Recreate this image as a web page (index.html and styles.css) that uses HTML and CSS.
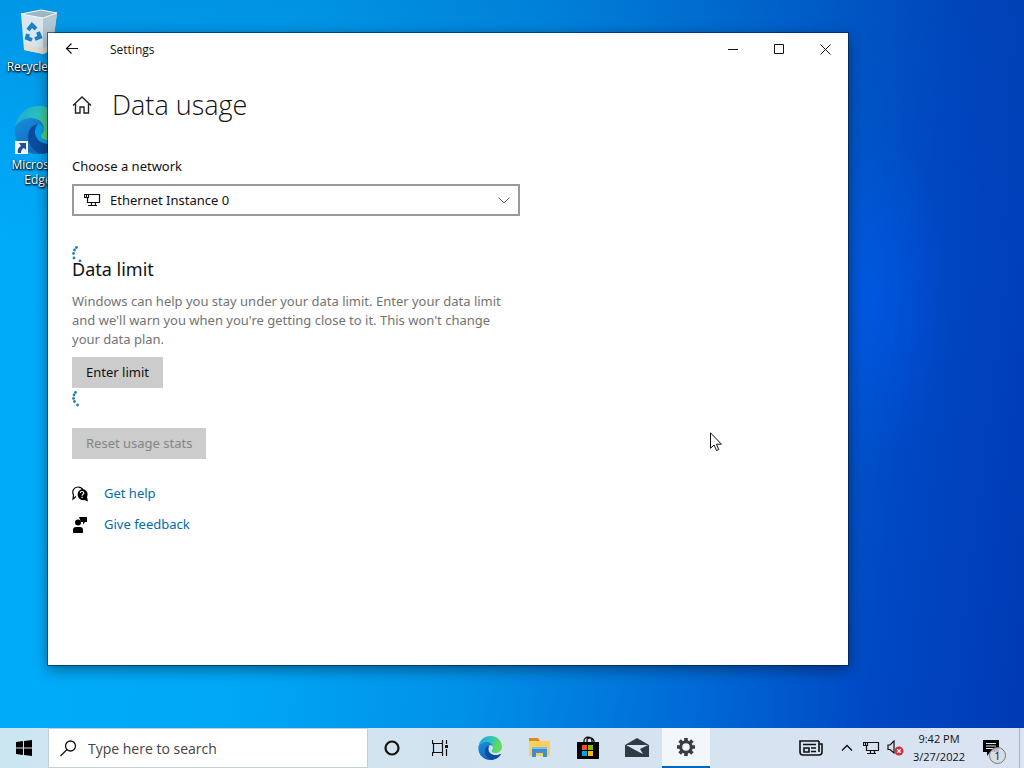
FILE: index.html
```html
<!DOCTYPE html>
<html lang="en">
  <head>
    <meta charset="UTF-8" />
    <meta name="viewport" content="width=device-width, initial-scale=1.0" />
    <title>Settings - Data usage</title>
    <link rel="stylesheet" href="styles.css" />
  </head>
  <body>
    <!-- Shared icons -->
    <svg class="defs" aria-hidden="true">
      <defs>
        <linearGradient id="edgeTop" x1="0" y1="0" x2="1" y2="0.3">
          <stop offset="0" stop-color="#1aa0dc" />
          <stop offset="0.5" stop-color="#2bc3c0" />
          <stop offset="1" stop-color="#66dc52" />
        </linearGradient>
        <linearGradient id="edgeSide" x1="0" y1="0" x2="0.5" y2="1">
          <stop offset="0" stop-color="#1a8fdd" />
          <stop offset="1" stop-color="#1067bd" />
        </linearGradient>
        <symbol id="edge" viewBox="0 0 48 48">
          <path fill="url(#edgeTop)" d="M1 22C2 9 12 0 25 0c13 0 23 10 23 21 0 8-6 13-13 13-5 0-8-2-8-4s3-3 3-7c0-5-5-9-11-9-8 0-14 3-18 8z" />
          <path fill="url(#edgeSide)" d="M1 21c3-5 9-9 16-9 8 0 13 5 13 11 0-3-3-5-6-5-5 0-8 5-8 11 0 9 7 16 16 18-3 1-5 1-8 1C10 48-1 36 1 21z" />
          <path fill="#0c4c9c" d="M24 18c-6 1-10 6-10 13 0 8 6 15 14 17 8-1 14-5 18-11 0-1-1-1-2-1-3 2-6 2-9 2-8 0-14-5-14-12 0-3 1-6 3-8z" />
        </symbol>
        <symbol id="monitor" viewBox="0 0 17 14">
          <path fill="none" stroke="currentColor" stroke-width="1.200" d="M5 1.500h10.500v8h-12V5M.5 1.500h4v3h-4zM7.500 9.500v3M11.500 9.500v3M4 12.500h9" />
          <path fill="currentColor" d="M2 2h1v2H2z" />
        </symbol>
      </defs>
    </svg>

    <main class="desktop">
      <ul class="shortcuts">
        <li class="shortcut">
          <svg width="44" height="48" viewBox="0 0 44 48">
            <path fill="#d9e6ed" d="M5 6l20-4 16 3-5 37-9 4-19-4z" />
            <path fill="#b3c8d3" d="M27 10l14-5-5 37-9 4z" />
            <path fill="#9fb6c2" d="M5 6l20-4 16 3-14 5z" />
            <path fill="none" stroke="#f1f7fa" d="M5 6l20-4 16 3-14 5z" />
            <path fill="#e8d9c8" d="M8 36l19 4 9-3-1 5-8 4-19-4z" opacity=".7" />
            <g fill="none" stroke="#1b7ecb" stroke-width="4">
              <path d="M12 22l4-5 4 4" />
              <path d="M22 24l2 5-5 2" />
              <path d="M16 32l-5-2 1-4" />
            </g>
          </svg>
          <span>Recycle Bin</span>
        </li>
        <li class="shortcut">
          <svg width="48" height="48"><use href="#edge" /></svg>
          <svg class="shortcut-arrow" width="13" height="13" viewBox="0 0 13 13">
            <path fill="#f5f5f5" d="M0 0h13v13H0z" />
            <path fill="#1c4f98" d="M4 2h7v7L9 7c-2 1-3 2-3 5H3c-1-3 0-5 3-7z" />
          </svg>
          <span>Microsoft Edge</span>
        </li>
      </ul>

      <section class="window">
        <header class="titlebar">
          <button class="back" aria-label="Back">
            <svg width="14" height="12" viewBox="0 0 14 12">
              <path fill="none" stroke="#111" stroke-width="1.200" d="M13 5.500H1.500M6.500.5l-5 5 5 5" />
            </svg>
          </button>
          <span class="titlebar-name">Settings</span>
          <button class="caption" aria-label="Minimize">
            <svg width="11" height="11"><path stroke="#111" d="M0 5.500h10" /></svg>
          </button>
          <button class="caption" aria-label="Maximize">
            <svg width="11" height="11"><path fill="none" stroke="#111" d="M.5.5h9v9h-9z" /></svg>
          </button>
          <button class="caption" aria-label="Close">
            <svg width="11" height="11"><path stroke="#111" d="M.5.5l10 10M10.500.5l-10 10" /></svg>
          </button>
        </header>

        <div class="page">
          <div class="page-header">
            <a href="#" class="home" aria-label="Home">
              <svg width="20" height="18" viewBox="0 0 20 18">
                <path fill="none" stroke="#222" stroke-width="1.400" d="M1 9.500L10 1l9 8.500M3.500 8v9H8v-6h4v6h4.500V8" />
              </svg>
            </a>
            <h1>Data usage</h1>
          </div>

          <label class="field-label" for="network">Choose a network</label>
          <div class="network-select">
            <svg class="network-icon" width="17" height="14"><use href="#monitor" /></svg>
            <select id="network">
              <option>Ethernet Instance 0</option>
            </select>
            <svg class="network-chevron" width="12" height="7" viewBox="0 0 12 7">
              <path fill="none" stroke="#666" d="M.5.5L6 6 11.500.5" />
            </svg>
          </div>

          <svg class="spinner" width="16" height="16" viewBox="0 0 16 16">
            <circle cx="4.500" cy="1.500" r="1.400" />
            <circle cx="2.500" cy="4" r="1.400" />
            <circle cx="1.500" cy="7.500" r="1.400" />
            <circle cx="2" cy="12" r="1.400" />
            <circle cx="8" cy="15" r="1.400" />
          </svg>
          <h2>Data limit</h2>
          <p class="description">
            Windows can help you stay under your data limit. Enter your data
            limit and we'll warn you when you're getting close to it. This
            won't change your data plan.
          </p>
          <button class="btn">Enter limit</button>
          <svg class="spinner" width="16" height="16" viewBox="0 0 16 16">
            <circle cx="3.500" cy="1.500" r="1.400" />
            <circle cx="2" cy="4" r="1.400" />
            <circle cx="1.500" cy="7.500" r="1.400" />
            <circle cx="2.500" cy="10.500" r="1.400" />
            <circle cx="5.500" cy="14" r="1.400" />
          </svg>
          <button class="btn btn-reset" disabled>Reset usage stats</button>

          <div class="support">
            <svg width="16" height="16" viewBox="0 0 16 16">
              <path fill="none" stroke="#000" stroke-width="1.200" d="M4 10.500L1 13l.5-4C-.5 5 2 1 6 1c2 0 4 1 5 3" />
              <path d="M10 3a5.500 5.500 0 0 1 5 8l1 4.500-3.500-1.500A5.500 5.500 0 1 1 10 3z" />
              <path fill="none" stroke="#fff" stroke-width="1.200" d="M8.300 7c0-2 3.500-2 3.500 0 0 1.300-1.700 1.200-1.700 2.700M10.100 10.800v1.200" />
            </svg>
            <a href="#">Get help</a>
          </div>
          <div class="support">
            <svg width="16" height="16" viewBox="0 0 16 16">
              <path d="M7 0h8v5h-2l-2 2.500V5H9z" />
              <circle cx="6" cy="5.500" r="3" />
              <path d="M1 16v-3c0-2 1-3 3-3h4c2 0 3 1 3 3v3z" />
            </svg>
            <a href="#">Give feedback</a>
          </div>
        </div>
      </section>

      <svg class="cursor" width="13" height="20" viewBox="0 0 13 20">
        <path fill="#fff" stroke="#111" d="M.5.8v15.500l3.600-3.300 2.400 5.500 2.300-1-2.400-5.300h5z" />
      </svg>
    </main>

    <footer class="taskbar">
      <button class="start" aria-label="Start">
        <svg width="16" height="16" viewBox="0 0 16 16">
          <path d="M0 2l7-1v6.500H0zM8 .9L16 0v7.500H8zM0 8.500h7V15l-7-1zM8 8.500h8V16l-8-1z" />
        </svg>
      </button>
      <div class="search">
        <svg width="17" height="17" viewBox="0 0 17 17">
          <circle cx="10.500" cy="6" r="5" fill="none" stroke="#111" stroke-width="1.300" />
          <path stroke="#111" stroke-width="1.300" d="M7 9.500L.5 16" />
        </svg>
        <input type="text" aria-label="Search" placeholder="Type here to search" />
      </div>
      <nav class="apps">
        <button aria-label="Cortana">
          <svg width="18" height="18">
            <circle cx="9" cy="9" r="6.500" fill="none" stroke="#111" stroke-width="2.200" />
          </svg>
        </button>
        <button aria-label="Task View">
          <svg width="18" height="16" viewBox="0 0 18 16">
            <path fill="none" stroke="#111" stroke-width="1.200" d="M.5 0v3.500h10V0M.5 16v-3.500h10V16M1.500 3.500v9M10.500 3.500v9M14.500 0v4M14.500 9v7" />
            <path fill="#111" d="M13 5h3v3h-3z" />
          </svg>
        </button>
        <button aria-label="Microsoft Edge">
          <svg width="24" height="24"><use href="#edge" /></svg>
        </button>
        <button aria-label="File Explorer">
          <svg width="24" height="20" viewBox="0 0 24 20">
            <path fill="#e08a1c" d="M2 0h9l2 3H2z" />
            <path fill="#fbce5e" d="M2 3h21v15H2z" />
            <path fill="#3e8ed0" d="M5 9h15v10h-4v-4H9v4H5z" />
            <path fill="#7dbdec" d="M5 9h15v2H5z" />
          </svg>
        </button>
        <button aria-label="Microsoft Store">
          <svg width="24" height="24" viewBox="0 0 24 24">
            <path fill="none" stroke="#111" stroke-width="1.300" d="M8 7V5c0-5 8-5 8 0v2M11 7V4c0-3 6-3 7 1v2" />
            <path fill="#000" d="M1 6h22v17H1z" />
            <path fill="#f25022" d="M6 9h5v5H6z" />
            <path fill="#7fba00" d="M12 9h5v5h-5z" />
            <path fill="#00a4ef" d="M6 15h5v5H6z" />
            <path fill="#ffb900" d="M12 15h5v5h-5z" />
          </svg>
        </button>
        <button aria-label="Mail">
          <svg width="24" height="20" viewBox="0 0 24 20">
            <path fill="#2f3b45" d="M0 7l12-7 12 7v12H0z" />
            <path fill="#dbe5f1" d="M1 7h22l-8 4 3 5-6-3z" />
          </svg>
        </button>
        <button class="active" aria-label="Settings">
          <svg width="20" height="20" viewBox="0 0 20 20">
            <circle cx="10" cy="10" r="5.300" fill="none" stroke="#3a3d40" stroke-width="3" />
            <path stroke="#3a3d40" stroke-width="3.600" d="M10 1v3M10 16v3M1 10h3M16 10h3M3.600 3.600l2.200 2.200M14.200 14.200l2.200 2.200M3.600 16.400l2.200-2.200M14.200 5.800l2.200-2.200" />
          </svg>
        </button>
      </nav>
      <div class="tray">
        <button class="news" aria-label="News and interests">
          <svg width="24" height="16" viewBox="0 0 24 16">
            <path fill="none" stroke="#111" stroke-width="1.600" d="M20 1H1v11c0 2 1 3 3 3h16c2 0 3-1 3-3V4h-3M20 1v11" />
            <path fill="none" stroke="#111" stroke-width="1.600" d="M4 4.500h13M5 8h5v4H5zM12 8h5M12 11.500h5" />
          </svg>
        </button>
        <button aria-label="Show hidden icons">
          <svg width="12" height="8">
            <path fill="none" stroke="#111" stroke-width="1.400" d="M1 6.500l5-5 5 5" />
          </svg>
        </button>
        <button aria-label="Network">
          <svg width="17" height="14"><use href="#monitor" /></svg>
        </button>
        <button aria-label="Volume">
          <svg width="17" height="16" viewBox="0 0 17 16">
            <path fill="none" stroke="#111" stroke-width="1.200" d="M1 5h2l4-4v12L3 9.500H1z" />
            <circle cx="12" cy="11" r="4.500" fill="#d32f36" />
            <path stroke="#fff" stroke-width="1.300" d="M10.200 9.200l3.600 3.600M13.800 9.200l-3.600 3.600" />
          </svg>
        </button>
        <button class="clock">
          <time datetime="21:42">9:42 PM</time>
          <time datetime="2022-03-27">3/27/2022</time>
        </button>
        <button class="notifications" aria-label="Notifications">
          <svg width="16" height="16" viewBox="0 0 16 16">
            <path d="M0 0h16v12H7l-3 4v-4H0z" />
            <path stroke="#dbe5f1" d="M3 3.500h10M3 6h10M3 8.500h7" />
          </svg>
          <span class="badge">1</span>
        </button>
        <button class="show-desktop" aria-label="Show desktop"></button>
      </div>
    </footer>
  </body>
</html>
```
FILE: styles.css
```css
* {
  box-sizing: border-box;
}
body {
  margin: 0;
  height: 100vh;
  display: flex;
  flex-direction: column;
  overflow: hidden;
  font-family: "Open Sans", "Noto Sans", sans-serif;
  font-size: 13px;
  line-height: 19px;
  color: #111;
}
svg {
  display: block;
  flex: none;
}
button {
  display: flex;
  align-items: center;
  justify-content: center;
  padding: 0;
  border: none;
  background: none;
  font: inherit;
  color: inherit;
}
.defs {
  position: absolute;
  width: 0;
  height: 0;
}

/* Desktop */
.desktop {
  position: relative;
  flex: 1;
  background:
    radial-gradient(ellipse 80px 170px at 85% 41%, rgba(0, 94, 255, 0.4), transparent),
    linear-gradient(rgba(0, 60, 150, 0.2), transparent 35%),
    linear-gradient(97deg, #00adfb 0%, #00a8f6 28%, #0090e8 50%, #0066d4 72%, #0048c4 86%, #003ab4 100%);
}
.shortcuts {
  display: flex;
  flex-direction: column;
  gap: 32px;
  width: 76px;
  margin: 0;
  padding: 8px 0 0;
  list-style: none;
}
.shortcut {
  position: relative;
  display: flex;
  flex-direction: column;
  align-items: center;
  gap: 3px;
  padding: 0 8px;
  font-size: 12px;
  line-height: 15px;
  text-align: center;
  color: #fff;
  text-shadow: 0 1px 2px #000, 1px 1px 2px #000;
}
.shortcut span {
  margin: 0 -8px;
}
.shortcut:last-child span {
  margin: 0;
}
.shortcut-arrow {
  position: absolute;
  left: 15px;
  top: 35px;
}

/* Settings window */
.window {
  position: absolute;
  left: 48px;
  top: 33px;
  width: 800px;
  height: 632px;
  background: #fff;
  box-shadow: 0 0 0 1px rgba(0, 30, 70, 0.6), 0 4px 14px rgba(0, 0, 0, 0.45);
}
.titlebar {
  display: flex;
  height: 32px;
}
.titlebar-name {
  flex: 1;
  padding-left: 14px;
  font-size: 12px;
  line-height: 33px;
}
.back {
  width: 48px;
}
.caption {
  width: 46px;
}
.page {
  display: flex;
  flex-direction: column;
  align-items: flex-start;
  padding: 20px 24px;
  font-family: "Noto Sans", "Open Sans", sans-serif;
}
.page-header {
  display: flex;
  align-items: center;
  gap: 20px;
  height: 40px;
  margin-bottom: 32px;
}
h1 {
  margin: 0;
  font-family: "Open Sans", "Noto Sans", sans-serif;
  font-size: 27px;
  font-weight: 300;
  line-height: 40px;
}
h2 {
  margin: 0 0 16px;
  font-size: 18px;
  font-weight: 400;
  line-height: 14px;
}
.field-label {
  margin-bottom: 8px;
}
.network-select {
  position: relative;
  width: 448px;
  max-width: 100%;
  margin-bottom: 30px;
}
.network-select select {
  display: block;
  width: 100%;
  height: 32px;
  padding: 0 36px;
  border: 2px solid #999;
  border-radius: 0;
  background: #fff;
  appearance: none;
  font: inherit;
  color: inherit;
}
.network-icon {
  position: absolute;
  left: 12px;
  top: 9px;
}
.network-chevron {
  position: absolute;
  right: 10px;
  top: 13px;
}
.spinner {
  fill: #2680b8;
}
.description {
  max-width: 440px;
  margin: 0 0 8px;
  color: #737373;
}
.btn {
  height: 31px;
  margin-bottom: 3px;
  padding: 0 14px;
  background: #ccc;
}
.btn-reset {
  margin: 21px 0 19px;
  color: #858585;
}
.support {
  display: flex;
  align-items: center;
  gap: 16px;
  height: 31px;
}
.support a {
  color: #006cae;
  text-decoration: none;
}
.cursor {
  position: absolute;
  left: 710px;
  top: 432px;
  pointer-events: none;
}

/* Taskbar */
.taskbar {
  display: flex;
  height: 40px;
  background: linear-gradient(90deg, #cce6f1, #d3e3ef 50%, #dae3f2);
}
.start {
  width: 48px;
}
.search {
  display: flex;
  align-items: center;
  gap: 11px;
  width: 320px;
  padding-left: 11px;
  border: 1px solid #c5ced4;
  background: #fff;
}
.search input {
  flex: 1;
  min-width: 0;
  padding: 0;
  border: none;
  outline: none;
  background: none;
  font: inherit;
  font-size: 14px;
}
.search input::placeholder {
  color: #444;
}
.apps {
  display: flex;
  gap: 1px;
}
.apps button {
  width: 48px;
}
.apps .active {
  background: #f2f7fb;
  border-bottom: 2px solid #0067c0;
}
.tray {
  display: flex;
  margin-left: auto;
}
.tray button {
  width: 24px;
}
.tray .news {
  width: 48px;
}
.tray .clock {
  flex-direction: column;
  width: 64px;
  font-size: 11px;
  line-height: 18px;
}
.tray .notifications {
  position: relative;
  justify-content: flex-start;
  width: 48px;
  padding-left: 12px;
}
.badge {
  position: absolute;
  left: 18px;
  top: 19px;
  width: 17px;
  height: 17px;
  border: 1px solid #777;
  border-radius: 50%;
  background: rgba(215, 220, 226, 0.85);
  font-size: 11px;
  line-height: 15px;
}
.tray .show-desktop {
  width: 5px;
  border-left: 1px solid #a9b4bf;
}
```
